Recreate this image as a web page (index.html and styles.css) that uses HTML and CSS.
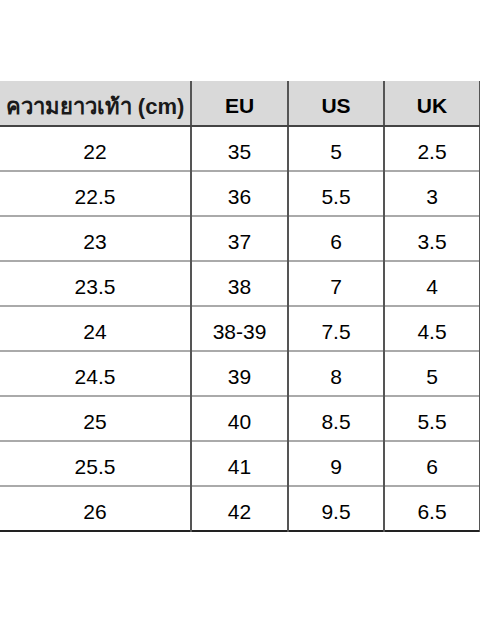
FILE: index.html
```html
<!DOCTYPE html>
<html lang="th">
<head>
    <meta charset="UTF-8">
    <meta name="viewport" content="width=device-width, initial-scale=1.0">
    <title>Size Chart</title>
    <link rel="stylesheet" href="styles.css">
</head>
<body>
    <table class="size-table">
        <thead>
            <tr>
                <th class="col-cm">ความยาวเท้า (cm)</th>
                <th class="col-eu">EU</th>
                <th class="col-us">US</th>
                <th class="col-uk">UK</th>
            </tr>
        </thead>
        <tbody>
            <tr><td>22</td><td>35</td><td>5</td><td>2.5</td></tr>
            <tr><td>22.5</td><td>36</td><td>5.5</td><td>3</td></tr>
            <tr><td>23</td><td>37</td><td>6</td><td>3.5</td></tr>
            <tr><td>23.5</td><td>38</td><td>7</td><td>4</td></tr>
            <tr><td>24</td><td>38-39</td><td>7.5</td><td>4.5</td></tr>
            <tr><td>24.5</td><td>39</td><td>8</td><td>5</td></tr>
            <tr><td>25</td><td>40</td><td>8.5</td><td>5.5</td></tr>
            <tr><td>25.5</td><td>41</td><td>9</td><td>6</td></tr>
            <tr><td>26</td><td>42</td><td>9.5</td><td>6.5</td></tr>
        </tbody>
    </table>
</body>
</html>
```

FILE: styles.css
```css
body{
    margin: 0;
    background: #fff;
    font-family: "Liberation Sans", "Noto Sans", "DejaVu Sans", sans-serif;
    color: #000;
}
.size-table{
    margin-top: 81px;
    width: 479px;
    border-collapse: collapse;
    table-layout: fixed;
    border-bottom: 2px solid #222;
}
.size-table th,
.size-table td{
    text-align: center;
    font-size: 21px;
    padding: 6px 0 0 0;
    border-left: 2px solid #666;
    border-right: 2px solid #555;
}
.size-table th:first-child,
.size-table td:first-child{
    border-left: 0;
}
.size-table th{
    height: 38px;
    background-color: #d9d9d9;
    font-weight: bold;
    border-bottom: 2px solid #444;
}
.size-table th.col-cm{
    font-size: 22px;
    color: #1a1a1a;
}
.size-table td{
    height: 37px;
    border-top: 2px solid #aaa;
}
.size-table tbody tr:first-child td{
    border-top: 0;
}
.col-cm{ width: 190px; }
.col-eu{ width: 95px; }
.col-us{ width: 94px; }
.col-uk{ width: 94px; }
```
